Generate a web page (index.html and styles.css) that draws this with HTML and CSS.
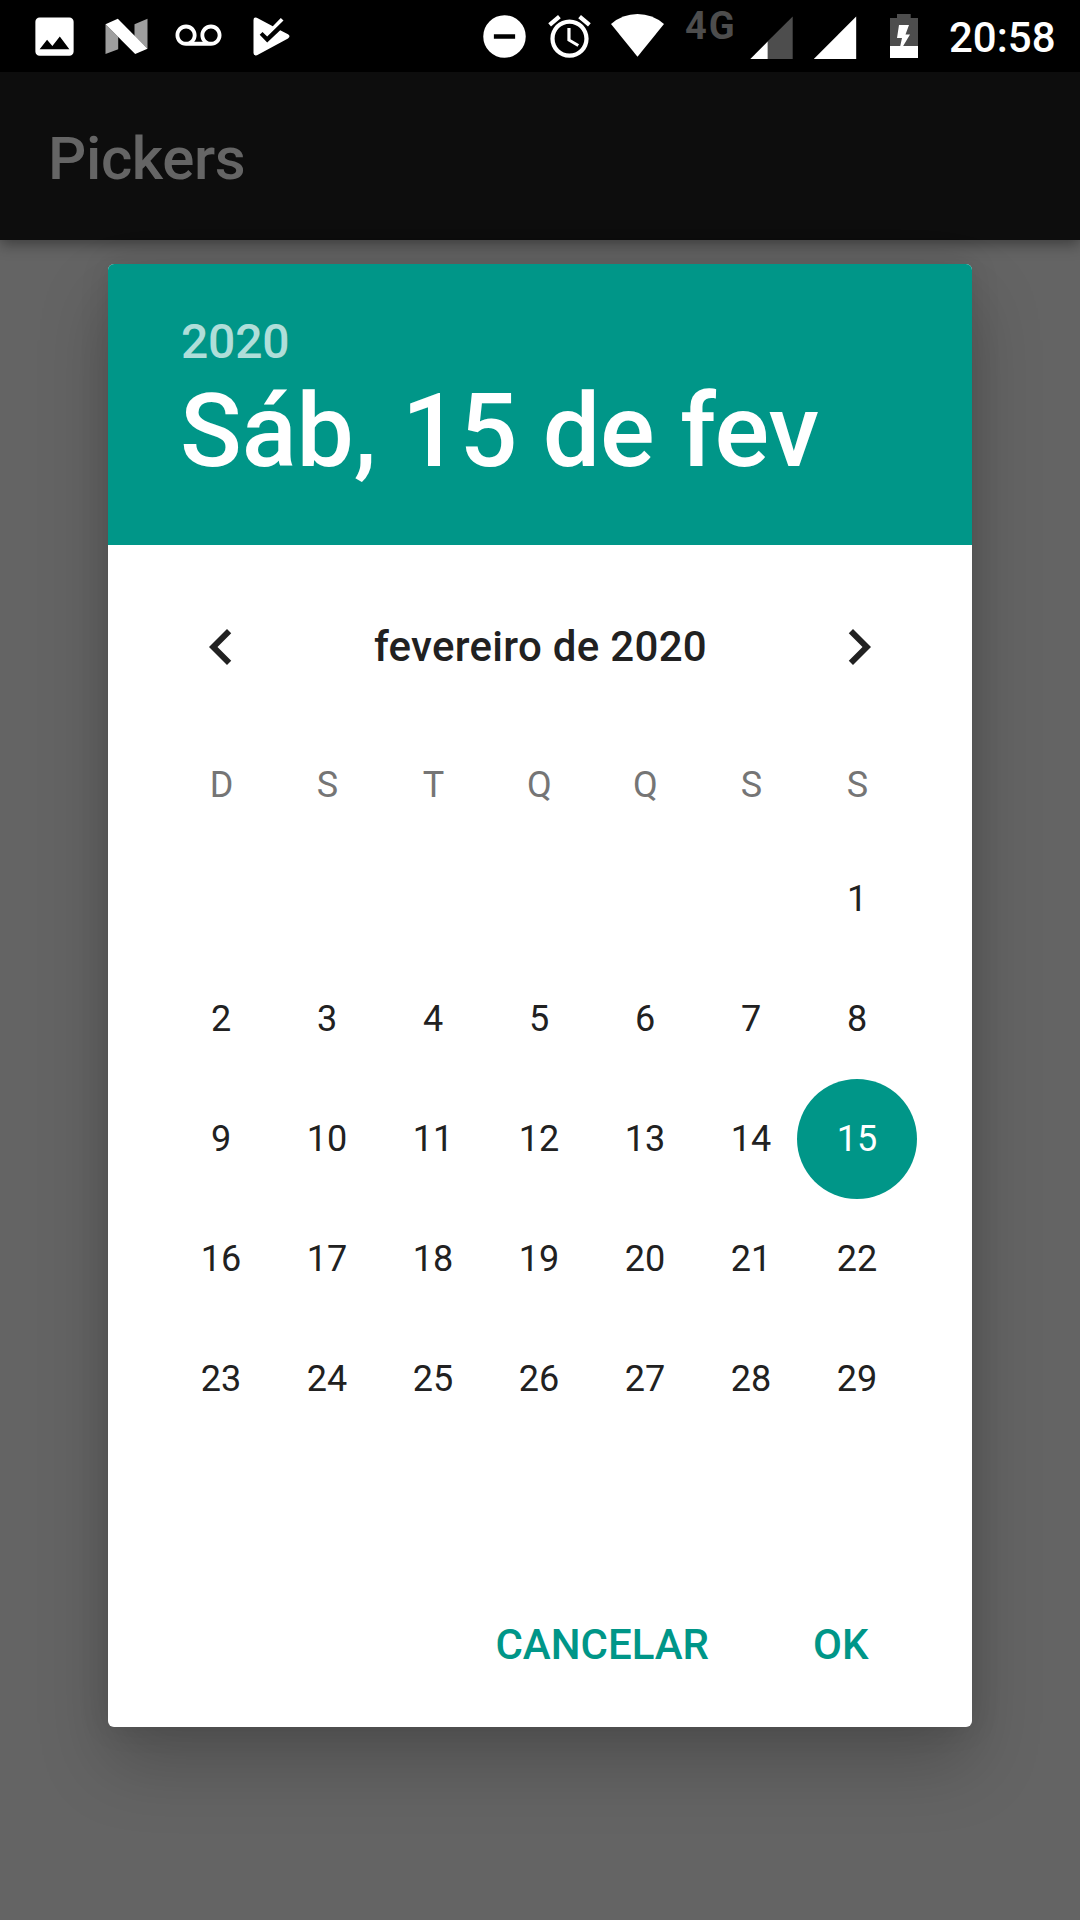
FILE: index.html
```html
<!DOCTYPE html>
<html lang="pt-BR">
<head>
<meta charset="utf-8">
<title>Pickers</title>
<link rel="stylesheet" href="styles.css">
</head>
<body>
<div class="status-bar">
  <div class="notifications">
    <svg class="icon" viewBox="0 0 24 24"><path d="M21 19V5c0-1.100-.9-2-2-2H5c-1.100 0-2 .9-2 2v14c0 1.100.9 2 2 2h14c1.100 0 2-.9 2-2zM8.500 13.500l2.500 3.010L14.500 12l4.500 6H5l3.500-4.500z"/></svg>
    <svg class="icon" viewBox="0 0 51 51"><path class="fold" d="M4.500 13.300L17.200 26v12.200L4.500 42.900zM33.500 13.200l13-5.400v30l-13-12.800z"/><path d="M4.500 13.300l12.300-5.500 29.700 30-12.300 5.100z"/></svg>
    <svg class="icon" viewBox="0 0 51 51"><path transform="translate(2.500 2.100) scale(1.917)" d="M18.500 6C15.460 6 13 8.460 13 11.500c0 1.330.47 2.550 1.260 3.500H9.740c.79-.95 1.260-2.170 1.260-3.500C11 8.460 8.540 6 5.500 6S0 8.460 0 11.500 2.460 17 5.500 17h13c3.040 0 5.500-2.460 5.500-5.500S21.540 6 18.500 6zm-13 9C3.570 15 2 13.430 2 11.500S3.570 8 5.500 8 9 9.570 9 11.500 7.430 15 5.500 15zm13 0c-1.930 0-3.500-1.570-3.500-3.500S16.570 8 18.500 8 22 9.570 22 11.500 20.430 15 18.500 15z"/></svg>
    <svg class="icon" viewBox="244.500 10.500 51 51"><path d="M253 19.500q0-3.200 3.300-2.200L272.300 25.700 280.300 17.400 283 20 266.700 36 262 31.500 259.200 34.300 266.700 42 279.700 29.700 287.500 33.700q3 2 0 4.200L256.500 54.800q-3.500.8-3.500-2.300z"/></svg>
  </div>
  <div class="system">
    <svg class="icon" viewBox="0 0 24 24"><path d="M12 2a10 10 0 1 0 0 20 10 10 0 0 0 0-20zm5 11.100H7v-2.200h10z"/></svg>
    <svg class="icon alarm" viewBox="0 0 24 24"><path d="M22 5.720l-4.600-3.860-1.290 1.530 4.600 3.860L22 5.720zM7.880 3.390L6.600 1.860 2 5.710l1.290 1.530 4.590-3.850zM12.500 8H11v6l4.750 2.850.75-1.230-4-2.370V8zM12 4c-4.970 0-9 4.030-9 9s4.020 9 9 9c4.970 0 9-4.030 9-9s-4.030-9-9-9zm0 16c-3.870 0-7-3.130-7-7s3.130-7 7-7 7 3.130 7 7-3.130 7-7 7z"/></svg>
    <svg class="wifi" viewBox="0 0 53 72"><path d="M0 24Q11.500 14 26.500 14T53 24L26.500 56.800z"/></svg>
    <span class="network">4G</span>
    <svg class="signal" viewBox="0 0 43 72"><path class="dim" d="M42.700 16.500V59H17.500V41.500z"/><path d="M.3 59L17.700 41.500V59z"/></svg>
    <svg class="signal second" viewBox="0 0 43 72"><path d="M42.200 16.500V59H-.2z"/></svg>
    <svg class="battery" viewBox="0 0 28 72"><path class="dim" d="M7 14h13.700v4H28v28H0V18h7z"/><path d="M0 46h28v12H0z"/><path d="M9 25h10l-3.500 9.500H20L13 46.200H10.200L12 38H7z"/></svg>
    <span class="clock">20:58</span>
  </div>
</div>
<header class="app-bar">Pickers</header>
<main class="screen">
  <section class="dialog">
    <div class="dialog-header">
      <div class="year">2020</div>
      <div class="date">Sáb, 15 de fev</div>
    </div>
    <div class="month-row">
      <svg class="chevron" viewBox="0 0 24 24"><path d="M15.410 7.410L14 6l-6 6 6 6 1.410-1.410L10.830 12z"/></svg>
      <span class="month">fevereiro de 2020</span>
      <svg class="chevron" viewBox="0 0 24 24"><path d="M10 6L8.590 7.410 13.170 12l-4.580 4.590L10 18l6-6z"/></svg>
    </div>
    <div class="week labels"><span>D</span><span>S</span><span>T</span><span>Q</span><span>Q</span><span>S</span><span>S</span></div>
    <div class="week"><span class="first">1</span></div>
    <div class="week"><span>2</span><span>3</span><span>4</span><span>5</span><span>6</span><span>7</span><span>8</span></div>
    <div class="week"><span>9</span><span>10</span><span>11</span><span>12</span><span>13</span><span>14</span><span class="selected">15</span></div>
    <div class="week"><span>16</span><span>17</span><span>18</span><span>19</span><span>20</span><span>21</span><span>22</span></div>
    <div class="week"><span>23</span><span>24</span><span>25</span><span>26</span><span>27</span><span>28</span><span>29</span></div>
    <div class="actions"><span>CANCELAR</span><span>OK</span></div>
  </section>
</main>
</body>
</html>
```

FILE: styles.css
```css
* { box-sizing: border-box; }
body {
  margin: 0;
  width: 1080px;
  height: 1920px;
  overflow: hidden;
  display: flex;
  flex-direction: column;
  background: #646464;
  font-family: Roboto, sans-serif;
}
svg { display: block; flex: none; fill: #fff; }

.status-bar {
  height: 72px;
  flex: none;
  display: flex;
  justify-content: space-between;
  padding: 0 25px 0 28.5px;
  background: #000;
  color: #fff;
}
.notifications, .system { display: flex; align-items: center; }
.notifications { gap: 21px; }
.icon { width: 51px; height: 51px; }
.fold { fill: #9e9e9e; }
.dim { fill: #4d4d4d; }
.alarm { margin-left: 14px; }
.wifi { width: 53px; height: 72px; margin-left: 16px; }
.network {
  width: 65px;
  margin-left: 21px;
  height: 72px;
  line-height: 52px;
  font-size: 38px;
  font-weight: 700;
  letter-spacing: 2px;
  color: #4d4d4d;
}
.signal { width: 43px; height: 72px; }
.second { margin-left: 21px; }
.battery { width: 28px; height: 72px; margin-left: 33px; }
.clock {
  width: 106px;
  margin-left: 31px;
  line-height: 75px;
  height: 72px;
  font-size: 42px;
  font-weight: 500;
}

.app-bar {
  height: 168px;
  flex: none;
  padding: 0 48px;
  line-height: 173px;
  background: #0d0d0d;
  color: #656565;
  font-size: 60px;
  font-weight: 500;
  letter-spacing: -.35px;
  box-shadow: 0 4px 14px rgba(0, 0, 0, .4);
}
.screen { padding: 24px 108px 0; }
.dialog {
  height: 1463px;
  display: flex;
  flex-direction: column;
  overflow: hidden;
  border-radius: 6px;
  background: #fff;
  color: #212121;
  box-shadow: 0 0 30px rgba(0, 0, 0, .1), 0 36px 70px rgba(0, 0, 0, .21);
}
.dialog-header {
  height: 281px;
  flex: none;
  padding: 50px 72px 0;
  background: #009688;
  color: #fff;
  font-weight: 500;
}
.year { padding-left: 1px; line-height: 55px; font-size: 48px; letter-spacing: -.2px; color: rgba(255, 255, 255, .7); }
.date { line-height: 124px; font-size: 102px; letter-spacing: -.1px; white-space: nowrap; }

.month-row {
  height: 144px;
  margin-top: 30px;
  padding: 0 77px;
  display: flex;
  align-items: center;
  justify-content: space-between;
  font-size: 42px;
  font-weight: 500;
}
.month { line-height: 48px; padding: 0 0 1px 1px; letter-spacing: .3px; }
.chevron { width: 72px; height: 72px; fill: #212121; }

.week {
  display: grid;
  grid-template-columns: repeat(7, 106px);
  padding-left: 60px;
  height: 120px;
  line-height: 120px;
  font-size: 36px;
  text-align: center;
}
.labels { padding-left: 60.5px; line-height: 132px; color: #757575; }
.first { grid-column: 7; }
.selected {
  width: 120px;
  height: 120px;
  margin-left: -7px;
  border-radius: 50%;
  background: #009688;
  color: #fff;
}

.actions {
  margin-top: auto;
  padding: 0 103.5px 1px 0;
  display: flex;
  justify-content: flex-end;
  gap: 104px;
  line-height: 163px;
  font-size: 42px;
  font-weight: 500;
  color: #009688;
}
```
